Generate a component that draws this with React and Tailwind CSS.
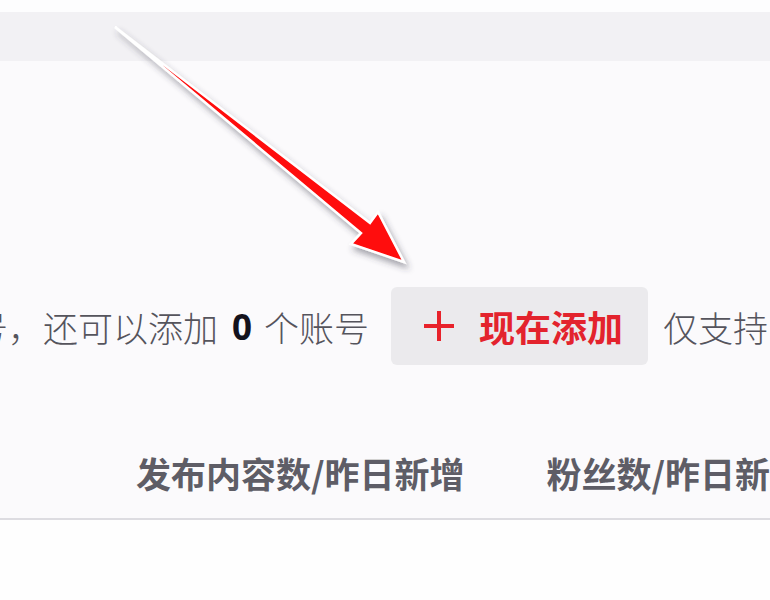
import React from "react";

const cjk = { fontFamily: '"Noto Sans CJK SC", "Noto Sans", sans-serif' };

function Arrow() {
  return (
    <svg
      className="pointer-events-none absolute left-0 top-0"
      width="770"
      height="600"
      viewBox="0 0 770 600"
    >
      <defs>
        <filter id="arrowShadow" x="-20%" y="-20%" width="140%" height="140%">
          <feDropShadow dx="3" dy="5" stdDeviation="3" floodColor="#3a3a4a" floodOpacity="0.45" />
        </filter>
      </defs>
      <path
        d="M115 27 L370 223 L378 212 L404 262 L351 244 L361 233 Z"
        fill="#ff0a0a"
        stroke="#ffffff"
        strokeWidth="2.5"
        strokeLinejoin="miter"
        filter="url(#arrowShadow)"
      />
    </svg>
  );
}

export default function App() {
  return (
    <div className="relative h-[600px] w-[770px] overflow-hidden bg-[#fefefe]" style={cjk}>
      <div className="h-[12px] bg-[#fdfdfe]" />
      <div className="h-[49px] bg-[#f2f1f4]" />
      <div className="flex h-[459px] flex-col bg-[#fbfafc]">
        <div className="mt-[226px] flex h-[78px] items-center">
          <div className="ml-[-27px] flex items-center whitespace-nowrap text-[35px] font-light leading-none text-[#55545c]">
            <span>号，还可以添加</span>
            <span className="ml-[14px] mr-[12px] font-bold text-[#14121c]" style={{ fontFamily: '"Noto Sans", sans-serif' }}>0</span>
            <span>个账号</span>
          </div>
          <button className="ml-[22px] flex h-[78px] w-[257px] shrink-0 items-center rounded-[6px] bg-[#ebeaed] pl-[32px]">
            <svg width="32" height="32" viewBox="0 0 32 32">
              <path d="M16 1 V31 M1 16 H31" stroke="#e8222b" strokeWidth="4" />
            </svg>
            <span className="ml-[24px] text-[36px] font-bold leading-none text-[#e3232d]">现在添加</span>
          </button>
          <span className="ml-[15px] whitespace-nowrap text-[35px] font-light leading-none text-[#55545c]">仅支持</span>
        </div>
        <div className="mt-[90px] flex items-center whitespace-nowrap text-[35px] font-bold leading-none text-[#5e5d66]">
          <span className="ml-[136px]">发布内容数/昨日新增</span>
          <span className="ml-[82px]">粉丝数/昨日新增</span>
        </div>
        <div className="mt-auto h-[2px] bg-[#dddce1]" />
      </div>
      <Arrow />
    </div>
  );
}
